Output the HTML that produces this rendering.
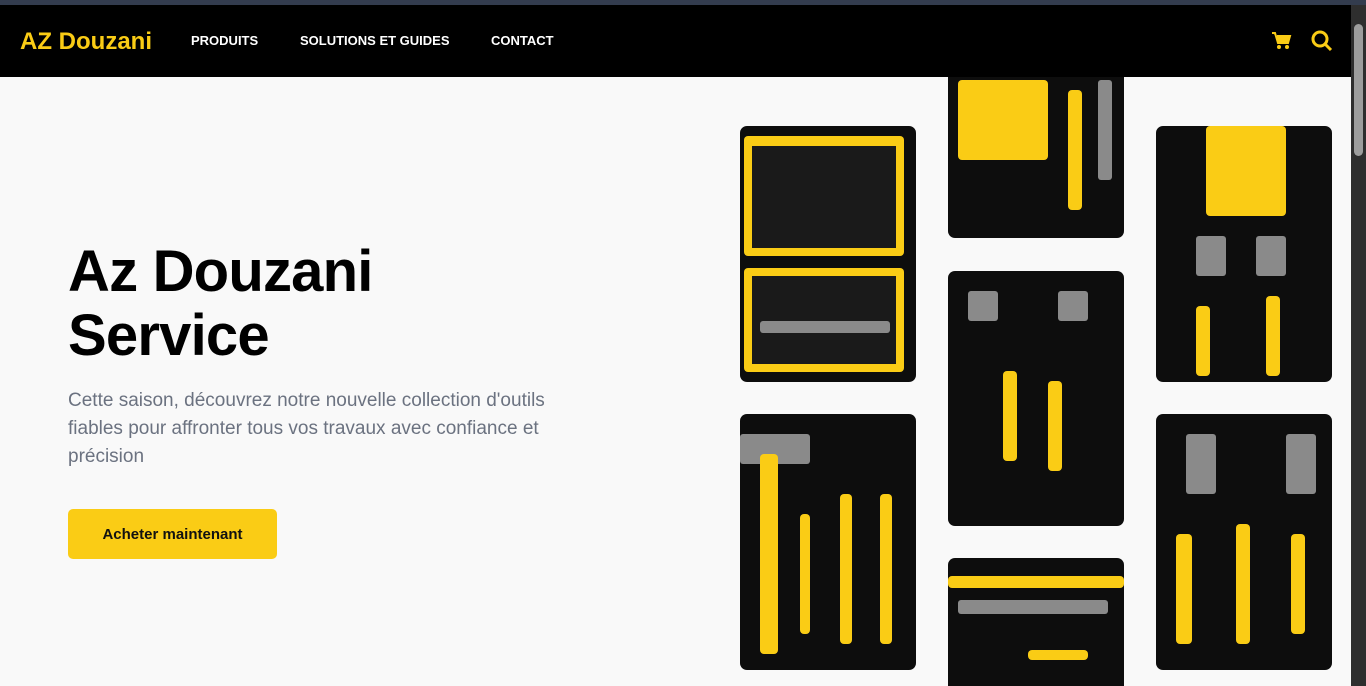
<!DOCTYPE html>
<html><head><meta charset="utf-8"><style>
*{margin:0;padding:0;box-sizing:border-box}
html,body{width:1366px;height:686px;overflow:hidden}
body{background:#f9f9f9;font-family:"Liberation Sans",sans-serif;position:relative}
.top{position:absolute;left:0;top:0;width:1366px;height:5px;background:#333c4e;z-index:5}
nav{position:absolute;left:0;top:5px;width:1351px;height:72px;background:#000;z-index:5}
.logo{position:absolute;left:20px;top:23px;color:#facc15;font-size:24px;font-weight:bold}
.lnk{position:absolute;top:28px;color:#fff;font-size:13px;font-weight:bold}
.sb{position:absolute;left:1351px;top:5px;width:15px;height:681px;background:#2e2e2e;z-index:6}
.th{position:absolute;left:1354px;top:24px;width:9px;height:132px;background:#9d9d9d;border-radius:5px;z-index:7}
h1{position:absolute;left:68px;top:240px;font-size:58px;line-height:64px;font-weight:bold;color:#000;letter-spacing:-0.8px}
p{position:absolute;left:68px;top:387px;width:520px;font-size:19px;line-height:28px;color:#6b7280}
.btn{position:absolute;left:68px;top:509px;width:209px;height:50px;background:#facc15;border-radius:5px;font-size:15px;font-weight:bold;text-align:center;line-height:52px;color:#111}
.img{position:absolute;width:176px;background:#0d0d0d;border-radius:7px;overflow:hidden}
.y{position:absolute;background:#facc15;border-radius:4px}
.g{position:absolute;background:#8a8a8a;border-radius:3px}
</style></head><body>
<div class="top"></div>
<nav>
<div class="logo">AZ Douzani</div>
<div class="lnk" style="left:191px">PRODUITS</div>
<div class="lnk" style="left:300px">SOLUTIONS ET GUIDES</div>
<div class="lnk" style="left:491px">CONTACT</div>
<svg style="position:absolute;left:1272px;top:27px" width="20" height="18" viewBox="0 0 20 18"><path d="M0 1h3l3 10h10l2-7H5" fill="#facc15" stroke="#facc15" stroke-width="2"/><circle cx="7" cy="15" r="2" fill="#facc15"/><circle cx="15" cy="15" r="2" fill="#facc15"/></svg>
<svg style="position:absolute;left:1311px;top:25px" width="22" height="22" viewBox="0 0 22 22"><circle cx="9" cy="9" r="7" fill="none" stroke="#facc15" stroke-width="3"/><path d="M14 14l6 6" stroke="#facc15" stroke-width="3"/></svg>
</nav>
<div class="sb"></div><div class="th"></div>
<h1>Az Douzani<br>Service</h1>
<p>Cette saison, découvrez notre nouvelle collection d'outils fiables pour affronter tous vos travaux avec confiance et précision</p>
<div class="btn">Acheter maintenant</div>

<div class="img" style="left:740px;top:126px;height:256px">
<div class="y" style="left:4px;top:10px;width:160px;height:120px"></div><div style="position:absolute;left:12px;top:20px;width:144px;height:102px;background:#1a1a1a"></div>
<div class="y" style="left:4px;top:142px;width:160px;height:104px"></div><div style="position:absolute;left:12px;top:150px;width:144px;height:88px;background:#1a1a1a"></div>
<div class="g" style="left:20px;top:195px;width:130px;height:12px"></div>
</div>
<div class="img" style="left:740px;top:414px;height:256px">
<div class="g" style="left:0;top:20px;width:70px;height:30px"></div><div class="y" style="left:20px;top:40px;width:18px;height:200px"></div>
<div class="y" style="left:60px;top:100px;width:10px;height:120px"></div><div class="y" style="left:100px;top:80px;width:12px;height:150px"></div><div class="y" style="left:140px;top:80px;width:12px;height:150px"></div>
</div>
<div class="img" style="left:948px;top:60px;height:178px">
<div class="y" style="left:10px;top:20px;width:90px;height:80px"></div><div class="y" style="left:120px;top:30px;width:14px;height:120px"></div><div class="g" style="left:150px;top:20px;width:14px;height:100px"></div>
</div>
<div class="img" style="left:948px;top:271px;height:255px">
<div class="g" style="left:20px;top:20px;width:30px;height:30px"></div><div class="y" style="left:55px;top:100px;width:14px;height:90px"></div><div class="y" style="left:100px;top:110px;width:14px;height:90px"></div><div class="g" style="left:110px;top:20px;width:30px;height:30px"></div>
</div>
<div class="img" style="left:948px;top:558px;height:128px;border-radius:7px 7px 0 0">
<div class="y" style="left:0;top:18px;width:176px;height:12px"></div><div class="g" style="left:10px;top:42px;width:150px;height:14px"></div><div class="y" style="left:80px;top:92px;width:60px;height:10px"></div>
</div>
<div class="img" style="left:1156px;top:126px;height:256px">
<div class="y" style="left:50px;top:0;width:80px;height:90px"></div><div class="y" style="left:40px;top:180px;width:14px;height:70px"></div><div class="y" style="left:110px;top:170px;width:14px;height:80px"></div><div class="g" style="left:40px;top:110px;width:30px;height:40px"></div><div class="g" style="left:100px;top:110px;width:30px;height:40px"></div>
</div>
<div class="img" style="left:1156px;top:414px;height:256px">
<div class="g" style="left:30px;top:20px;width:30px;height:60px"></div><div class="g" style="left:130px;top:20px;width:30px;height:60px"></div><div class="y" style="left:20px;top:120px;width:16px;height:110px"></div><div class="y" style="left:80px;top:110px;width:14px;height:120px"></div><div class="y" style="left:135px;top:120px;width:14px;height:100px"></div>
</div>
</body></html>
